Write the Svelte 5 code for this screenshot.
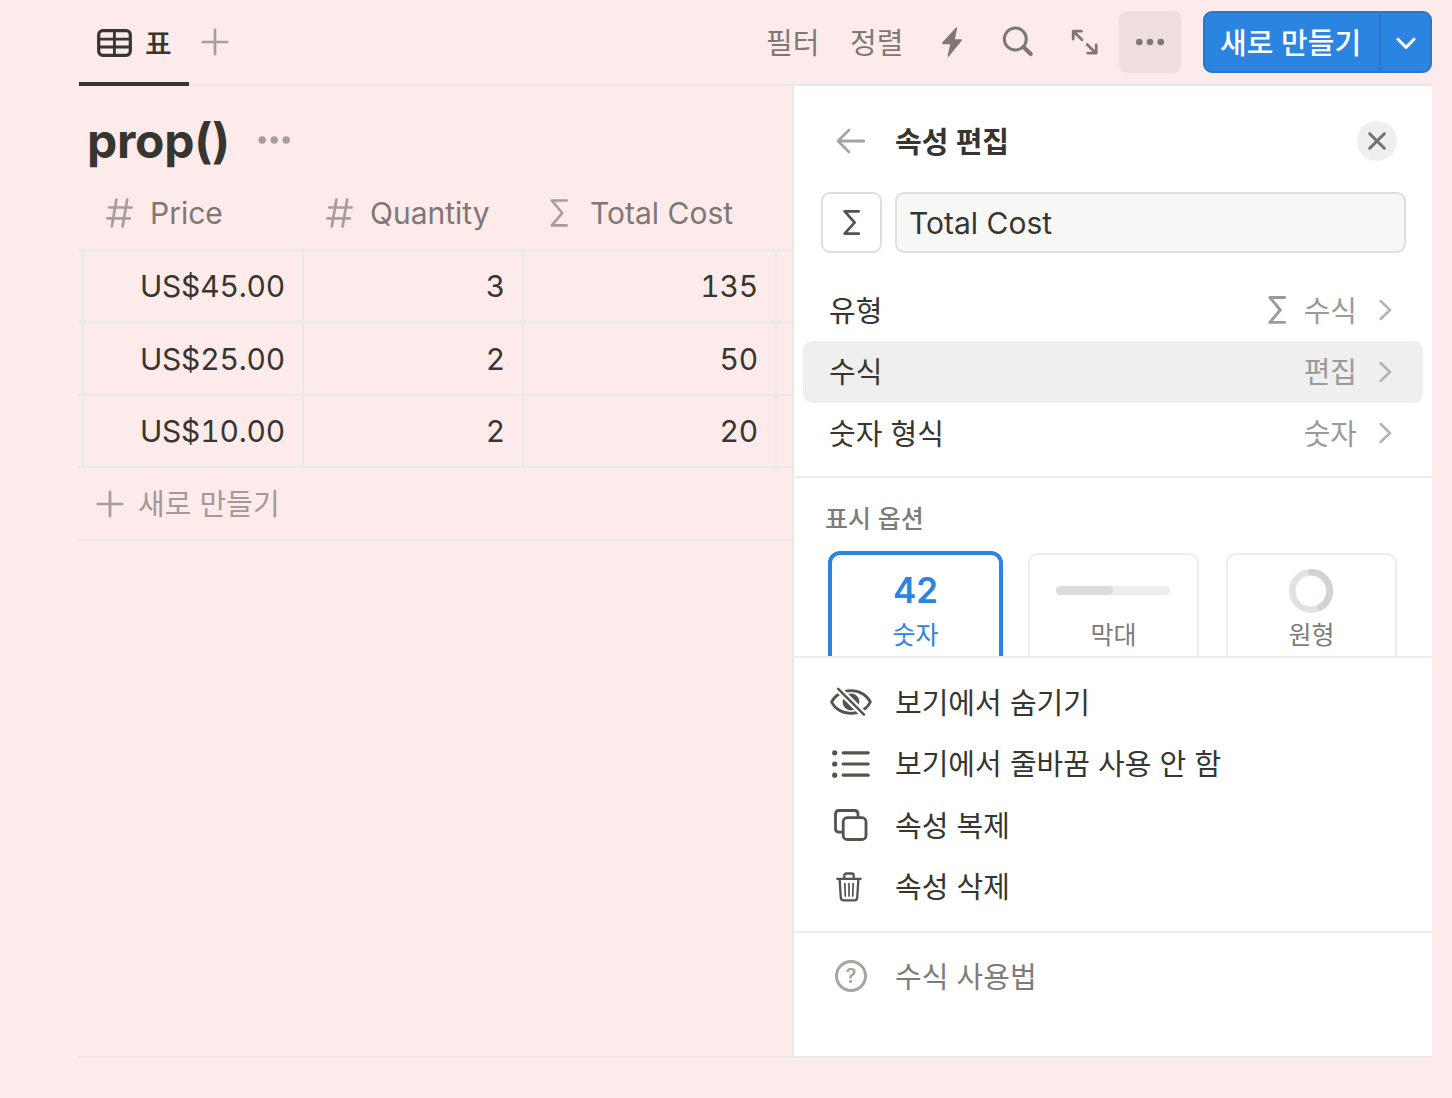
<script lang="ts">
    const columns = [
        { name: 'Price', icon: 'hash' },
        { name: 'Quantity', icon: 'hash' },
        { name: 'Total Cost', icon: 'sigma' },
    ];

    const rows = [
        ['US$45.00', '3', '135'],
        ['US$25.00', '2', '50'],
        ['US$10.00', '2', '20'],
    ];

    const settings = [
        { label: '유형', value: '수식', icon: true },
        { label: '수식', value: '편집', active: true },
        { label: '숫자 형식', value: '숫자' },
    ];

    const actions = [
        { label: '보기에서 숨기기', icon: 'hide' },
        { label: '보기에서 줄바꿈 사용 안 함', icon: 'list' },
        { label: '속성 복제', icon: 'copy' },
        { label: '속성 삭제', icon: 'trash' },
    ];

    let name = $state('Total Cost');
    let display = $state('number');
</script>

{#snippet sigma(width: number, height: number)}
    <svg {width} {height} viewBox="0 0 18 28" preserveAspectRatio="none">
        <path d="M16.6 1.5H1.8L12.3 14L1.8 26.4H16.6" />
    </svg>
{/snippet}

{#snippet plus()}
    <svg class="plus" width="28" height="28" viewBox="0 0 28 28"><path d="M14 1.8V26.2M1.8 14H26.2" /></svg>
{/snippet}

<div class="page">
    <header class="toolbar">
        <button class="tab">
            <svg width="36" height="28" viewBox="0 0 36 28">
                <rect x="1.7" y="1.7" width="31.6" height="24.6" rx="4" />
                <path d="M17.4 2V26M2 10.2H33M2 18H33" />
            </svg>
            <span>표</span>
        </button>
        <button class="add-view" aria-label="Add view">{@render plus()}</button>

        <div class="tools">
            <button class="text-tool">필터</button>
            <button class="text-tool sort">정렬</button>
            <button class="icon-tool" aria-label="Automations">
                <svg width="32" height="32" viewBox="0 0 32 32">
                    <path class="solid" d="M20 1.4Q21.4 .6 21.2 2.2L18.8 13.2H25.2Q26.6 13.4 25.7 14.8L12.8 30.4Q11.4 31.4 11.6 29.7L14.2 18.2H7Q5.4 18 6.3 16.6Z" />
                </svg>
            </button>
            <button class="icon-tool search" aria-label="Search">
                <svg width="32" height="32" viewBox="0 0 32 32">
                    <circle cx="13.3" cy="13" r="11" stroke-width="3" />
                    <path d="M21.5 21L28.700 28" stroke-width="4.2" />
                </svg>
            </button>
            <button class="icon-tool expand" aria-label="Expand">
                <svg width="32" height="32" viewBox="0 0 32 32">
                    <path d="M5.2 13.2V5.200H13.400M5.600 5.600L14 13.800M19.200 18.600L27.400 26.800M19.800 27.200H28.200V19" stroke-width="2.8" />
                </svg>
            </button>
            <button class="more" aria-label="More">
                <svg width="30" height="8" viewBox="0 0 30 8">
                    <circle cx="4.3" cy="4" r="3.3" /><circle cx="15" cy="4" r="3.3" /><circle cx="25.7" cy="4" r="3.3" />
                </svg>
            </button>
            <div class="new">
                <button class="new-label">새로 만들기</button>
                <button class="new-arrow" aria-label="New options">
                    <svg width="20" height="14" viewBox="0 0 20 14"><path d="M2 2.200L10 10.400L18 2.200" /></svg>
                </button>
            </div>
        </div>
    </header>

    <div class="content">
        <main class="database">
            <div class="title">
                <h1>prop()</h1>
                <svg width="34" height="8" viewBox="0 0 34 8">
                    <circle cx="4.2" cy="4" r="3.7" /><circle cx="16.2" cy="4" r="3.7" /><circle cx="28.2" cy="4" r="3.7" />
                </svg>
            </div>

            <div class="table">
                <div class="row head">
                    {#each columns as column}
                    <div class="column">
                        <span class="column-icon">
                            {#if column.icon === 'hash'}
                                <svg width="27" height="30" viewBox="0 0 27 30">
                                    <path d="M10.4 1.5L5.8 28.5M21.2 1.5L16.6 28.5M3.2 9.5H25.6M1.4 20.3H23.8" />
                                </svg>
                            {:else}
                                {@render sigma(18, 28)}
                            {/if}
                        </span>
                        {column.name}
                    </div>
                    {/each}
                </div>
                {#each rows as row}
                <div class="row">
                    {#each row as cell}
                        <div class="cell">{cell}</div>
                    {/each}
                    <div class="cell"></div>
                </div>
                {/each}
                <button class="new-row">{@render plus()}<span>새로 만들기</span></button>
            </div>
        </main>

        <aside class="panel">
            <div class="panel-head">
                <button class="back" aria-label="Back">
                    <svg width="30" height="26" viewBox="0 0 30 26"><path d="M13 2L2 13L13 24M2.5 13H27.8" /></svg>
                </button>
                <h2>속성 편집</h2>
                <button class="close" aria-label="Close">
                    <svg width="20" height="20" viewBox="0 0 20 20"><path d="M2.7 2.7L17.3 17.3M17.3 2.7L2.7 17.3" /></svg>
                </button>
            </div>

            <div class="name">
                <button class="type-icon" aria-label="Icon">{@render sigma(17, 25)}</button>
                <input type="text" bind:value={name} aria-label="Property name" />
            </div>

            <div class="settings">
                {#each settings as item}
                <button class="setting" class:active={item.active}>
                    <span class="setting-label">{item.label}</span>
                    {#if item.icon}
                        <span class="setting-icon">{@render sigma(18, 28)}</span>
                    {/if}
                    <span class="value">{item.value}</span>
                    <svg class="chevron" width="13" height="22" viewBox="0 0 13 22"><path d="M1.6 2L11 11L1.6 20" /></svg>
                </button>
                {/each}
            </div>

            <div class="display">
                <h3>표시 옵션</h3>
                <div class="cards">
                    <button class="card" class:selected={display === 'number'} onclick={() => (display = 'number')}>
                        <span class="preview number">42</span>
                        <span class="card-label">숫자</span>
                    </button>
                    <button class="card" class:selected={display === 'bar'} onclick={() => (display = 'bar')}>
                        <span class="preview"><span class="bar"><span class="fill"></span></span></span>
                        <span class="card-label">막대</span>
                    </button>
                    <button class="card" class:selected={display === 'ring'} onclick={() => (display = 'ring')}>
                        <span class="preview">
                            <svg class="ring" width="44" height="44" viewBox="0 0 44 44">
                                <circle cx="22" cy="22" r="18.7" />
                                <path d="M22 3.3A18.7 18.7 0 0 1 31.4 38.2" />
                            </svg>
                        </span>
                        <span class="card-label">원형</span>
                    </button>
                </div>
            </div>

            <div class="actions">
                {#each actions as action}
                <button class="action">
                    <span class="action-icon">
                        {#if action.icon === 'hide'}
                            <svg width="42" height="30" viewBox="0 0 42 30">
                                <path d="M1.6 15C5 8 12.5 3.6 21 3.6S37 8 40.4 15C37 22 29.5 26.4 21 26.4S5 22 1.6 15Z" stroke-width="2.8" />
                                <circle class="solid" cx="21" cy="15" r="8.4" />
                                <path class="gap" d="M8.2 1.8L34 27.6" />
                                <path d="M8.2 1.8L34 27.6" stroke-width="2.4" />
                            </svg>
                        {:else if action.icon === 'list'}
                            <svg width="38" height="30" viewBox="0 0 38 30">
                                <path d="M11.2 3.8H36.2M11.2 15H36.2M11.2 26.2H36.2" stroke-width="3.2" />
                                <circle class="solid" cx="2.7" cy="3.8" r="2.6" />
                                <circle class="solid" cx="2.7" cy="15" r="2.6" />
                                <circle class="solid" cx="2.7" cy="26.2" r="2.6" />
                            </svg>
                        {:else if action.icon === 'copy'}
                            <svg width="34" height="32" viewBox="0 0 34 32">
                                <path d="M8.5 23.2H5Q1.5 23.2 1.5 19.7V5Q1.5 1.5 5 1.5H20.5Q24 1.5 24 5V8" stroke-width="2.8" />
                                <rect x="9.2" y="8.7" width="22.8" height="21.8" rx="4" stroke-width="2.8" />
                            </svg>
                        {:else}
                            <svg class="trash" width="26" height="30" viewBox="0 0 26 30">
                                <path d="M1.3 6.8H24.7M8.3 6V3.6Q8.3 1.5 10.4 1.5H15.6Q17.7 1.5 17.7 3.6V6M3.6 7L4.8 25.6Q5 28.3 7.6 28.3H18.4Q21 28.3 21.2 25.6L22.4 7" stroke-width="2.3" />
                                <path d="M8.8 11.5L9.3 24M13 11.5V24M17.2 11.5L16.7 24" stroke-width="1.7" />
                            </svg>
                        {/if}
                    </span>
                    <span class="action-label">{action.label}</span>
                </button>
                {/each}
            </div>

            <button class="action help">
                <span class="action-icon">
                    <span class="question">?</span>
                </span>
                <span class="action-label">수식 사용법</span>
            </button>
        </aside>
    </div>
</div>

<style>
:global(body) {
    margin: 0;
    background: #fdebeb;
}
.page {
    --text: #37352f;
    --gray: #7f7774;
    --light: #a79d9b;
    --line: #e9e9e7;
    --panel-line: #ededec;
    --blue: #2b84df;
    box-sizing: border-box;
    width: 1452px;
    height: 1098px;
    padding: 0 20px 40px 79px;
    overflow: hidden;
    background: #fdebeb;
    color: var(--text);
    font-family: Inter, "Noto Sans CJK KR", sans-serif;
    font-size: 29px;
    line-height: 40px;
}
.page * {
    box-sizing: border-box;
}
.page svg {
    display: block;
    flex: none;
    fill: none;
    stroke: currentColor;
    stroke-linecap: round;
    stroke-linejoin: round;
}
.page .solid {
    fill: currentColor;
    stroke: none;
}
button {
    display: flex;
    align-items: center;
    padding: 0;
    border: none;
    background: none;
    color: inherit;
    font: inherit;
    white-space: nowrap;
    cursor: pointer;
}
h1, h2, h3 {
    margin: 0;
}

.toolbar {
    display: flex;
    height: 86px;
    border-bottom: 2px solid var(--line);
}
.tab {
    width: 110px;
    height: 86px;
    padding: 4px 0 0 18px;
    border-bottom: 4px solid var(--text);
    font-weight: 500;
    gap: 12px;
}
.tab span {
    padding-top: 3px;
}
.tab svg {
    stroke-width: 3.2;
}
.tab path {
    stroke-width: 2.8;
}
.add-view {
    height: 84px;
    margin-left: 12px;
}
.plus {
    color: var(--light);
    stroke-width: 2.7;
}
.tools {
    display: flex;
    align-items: center;
    height: 84px;
    margin-left: auto;
    color: var(--gray);
}
.text-tool {
    width: 54px;
    padding-top: 4px;
}
.sort {
    margin: 0 32px 0 30px;
}
.search {
    margin: 0 34px;
}
.more {
    justify-content: center;
    width: 62px;
    height: 62px;
    margin: 0 22px 0 19px;
    border-radius: 8px;
    background: #eedfde;
}
.page .more svg,
.page .title svg {
    fill: currentColor;
    stroke: none;
}
.new {
    display: flex;
    width: 229px;
    height: 62px;
    border: 2px solid #2a78c8;
    border-radius: 9px;
    background: var(--blue);
    color: #fff;
}
.new-label {
    width: 176px;
    padding: 4px 0 0 15px;
    border-right: 2px solid #2a78c8;
    font-weight: 500;
}
.new-arrow {
    flex: 1;
    justify-content: center;
    padding-top: 4px;
}
.new-arrow svg {
    stroke-width: 3;
}

.content {
    display: flex;
    height: 972px;
    border-bottom: 2px solid var(--line);
}
.database {
    width: 713px;
}
.title {
    display: flex;
    align-items: center;
    height: 91px;
    padding: 18px 0 0 8px;
    gap: 30px;
}
h1 {
    width: 141px;
    font-size: 48px;
    font-weight: 700;
    letter-spacing: -0.3px;
    line-height: 60px;
}
.title svg {
    margin-bottom: 1px;
    color: var(--light);
}
.table {
    font-size: 30px;
}
.row {
    display: grid;
    grid-template-columns: 220px 220px 253px 1fr;
    height: 72.5px;
    padding-left: 3px;
    border-bottom: 2px solid var(--line);
}
.head {
    height: 73.9px;
}
.column {
    display: flex;
    align-items: center;
    padding-left: 24px;
    gap: 17px;
    color: var(--gray);
}
.column-icon {
    display: flex;
    justify-content: center;
    width: 27px;
    color: var(--light);
    stroke-width: 2.7;
}
.column-icon svg {
    margin-right: 1px;
}
.cell {
    display: flex;
    align-items: center;
    justify-content: flex-end;
    padding-right: 17px;
    border-left: 2px solid var(--line);
    font-variant-numeric: tabular-nums;
    letter-spacing: -0.2px;
}
.new-row {
    width: 100%;
    height: 72.5px;
    padding-left: 17px;
    gap: 14px;
    border-bottom: 2px solid var(--line);
    color: #a39998;
    font-size: 29px;
}
.new-row span {
    padding-top: 2px;
}

.panel {
    display: flex;
    flex-direction: column;
    flex: 1;
    border-left: 2px solid var(--line);
    background: #fff;
}
.panel-head {
    display: flex;
    align-items: center;
    height: 106px;
    padding: 4px 35px 0 42px;
}
.back {
    color: #a5a4a1;
    stroke-width: 2.8;
}
h2 {
    margin-left: 29px;
    padding-top: 4px;
    font-size: 29px;
    font-weight: 600;
}
.close {
    justify-content: center;
    width: 40px;
    height: 40px;
    margin-left: auto;
    border-radius: 50%;
    background: #efefef;
    color: #73726e;
}
.close svg {
    stroke-width: 3;
}
.name {
    display: flex;
    padding: 0 26px 0 27px;
    gap: 13px;
}
.type-icon {
    justify-content: center;
    width: 61px;
    height: 61px;
    border: 2px solid #dfdfde;
    border-radius: 9px;
    color: #55534e;
    stroke-width: 3;
}
.name input {
    flex: 1;
    min-width: 0;
    height: 61px;
    padding: 0 12px;
    border: 2px solid #dfdfde;
    border-radius: 9px;
    outline: none;
    background: #f7f7f5;
    color: var(--text);
    font-family: inherit;
    font-size: 30px;
}
.settings {
    height: 225px;
    padding: 26.5px 9px 0;
    border-bottom: 2px solid var(--panel-line);
}
.setting {
    width: 100%;
    height: 61.5px;
    padding: 0 31px 0 26px;
    border-radius: 9px;
}
.active {
    background: #efefef;
}
.setting-label {
    margin-right: auto;
    padding-top: 3px;
}
.value,
.setting-icon {
    color: #9b9a97;
}
.value {
    padding-top: 3px;
}
.setting-icon {
    margin-right: 18px;
}
.setting-icon svg {
    stroke-width: 2.8;
}
.chevron {
    margin-left: 22px;
    color: #b4b3b1;
    stroke-width: 2.5;
}
.display {
    height: 180px;
    padding: 21px 0 0 31px;
    overflow: hidden;
    border-bottom: 2px solid var(--panel-line);
}
h3 {
    color: #7d7c78;
    font-size: 25px;
    font-weight: 500;
}
.cards {
    display: flex;
    margin-top: 14px;
    padding-left: 5px;
    gap: 27px;
}
.card {
    flex-direction: column;
    width: 171px;
    height: 124px;
    padding-top: 14px;
    border: 2px solid var(--panel-line);
    border-radius: 10px;
    color: #7d7c78;
    font-size: 25px;
}
.selected {
    width: 175px;
    height: 128px;
    margin: -2px;
    border: 4px solid var(--blue);
    border-radius: 12px;
    color: var(--blue);
}
.preview {
    display: flex;
    align-items: center;
    height: 44px;
}
.number {
    padding-bottom: 2px;
    font-size: 35px;
    font-weight: 600;
}
.card-label {
    padding-top: 2px;
}
.bar {
    width: 114px;
    height: 9px;
    margin: 0 1px 1px 0;
    border-radius: 5px;
    background: #ededec;
}
.fill {
    display: block;
    width: 50%;
    height: 100%;
    border-radius: 5px;
    background: #dcdcdb;
}
.ring {
    margin-right: 1px;
    color: #e3e2e0;
    stroke-width: 6.6;
}
.ring path {
    stroke: #d3d2ce;
}
.actions {
    height: 275px;
    padding-top: 14px;
    border-bottom: 2px solid var(--panel-line);
}
.action {
    width: 100%;
    height: 61.5px;
    padding-left: 36px;
}
.action-icon {
    display: flex;
    justify-content: center;
    width: 42px;
    margin: 0 23px 1px 0;
    color: #55534e;
}
.action-label {
    padding-top: 2px;
}
.page .gap {
    stroke: #fff;
    stroke-width: 7;
}
.trash {
    margin-right: 4px;
}
.help {
    margin-top: 13px;
    color: #7d7c78;
}
.question {
    width: 32px;
    height: 32px;
    border: 3px solid #a5a4a1;
    border-radius: 50%;
    color: #a5a4a1;
    font-size: 20px;
    font-weight: 600;
    line-height: 26px;
    text-align: center;
}
</style>
